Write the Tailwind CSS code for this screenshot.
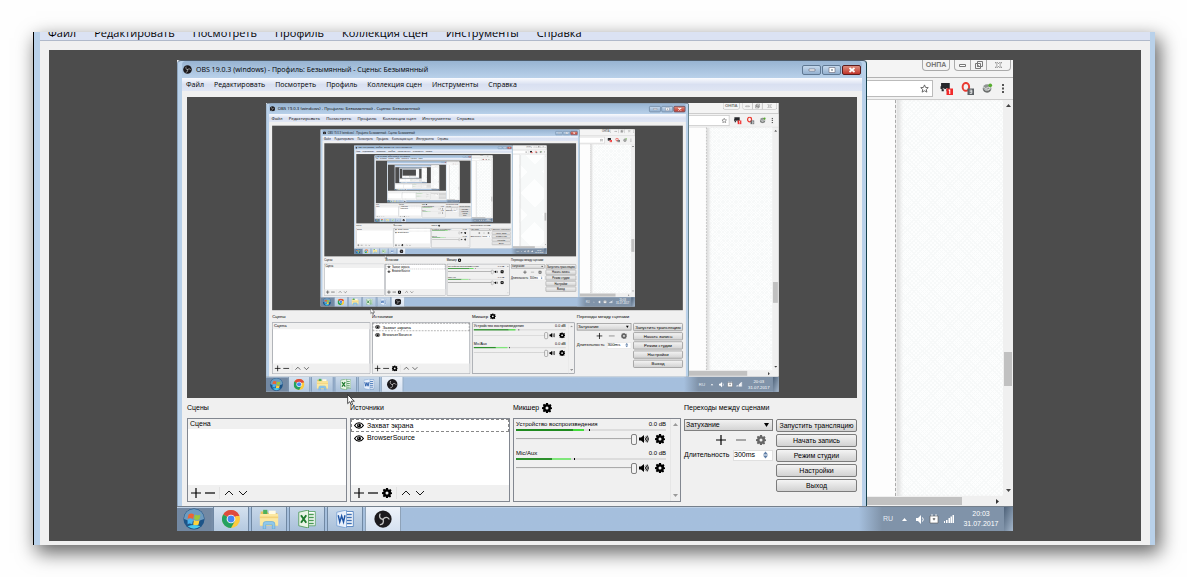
<!DOCTYPE html>
<html lang="ru">
<head>
    <meta charset="UTF-8">
    <meta name="viewport" content="width=device-width, initial-scale=1.0">
    <title>OBS 19.0.3</title>
    <script src="https://cdn.jsdelivr.net/npm/@tailwindcss/browser@4"></script>
</head>
<body class="bg-[#fefefe] p-8 font-['Open_Sans','Noto_Sans',sans-serif] text-black">
    <!-- Иконки -->
    <svg class="hidden">
        <symbol id="i-plus" viewBox="0 0 10 10"><path d="M5 0v10M0 5h10" fill="none" stroke="currentColor" stroke-width="1.2"/></symbol>
        <symbol id="i-minus" viewBox="0 0 10 10"><path d="M0 5h10" fill="none" stroke="currentColor" stroke-width="1.2"/></symbol>
        <symbol id="i-up" viewBox="0 0 10 10"><path d="M1 7l4-4 4 4" fill="none" stroke="currentColor" stroke-width=".9"/></symbol>
        <symbol id="i-down" viewBox="0 0 10 10"><path d="M1 3l4 4 4-4" fill="none" stroke="currentColor" stroke-width=".9"/></symbol>
        <symbol id="i-gear" viewBox="0 0 20 20">
            <path fill="currentColor" fill-rule="evenodd" d="M8 0h4l.6 3 1.600.7L16.800 2l2.200 2.800-1.300 2.400.5 1.300L20 9v3l-2.400.6-.7 1.600L18.200 17 15.800 19l-2.500-1.600-1 .4L12 20H8l-.5-2.500-1.400-.5L4 18.500 1.500 16l1.400-2.200-.6-1.400L0 12V8.500l2.400-.6.6-1.400L1.600 4.200 4 1.600l2.300 1.500 1.200-.4zM10 7a3 3 0 1 0 0 6 3 3 0 0 0 0-6z"/>
        </symbol>
        <symbol id="i-eye" viewBox="0 0 18 12">
            <path d="M1 6c4-6.500 12-6.500 16 0-4 6.500-12 6.500-16 0z" fill="none" stroke="#000" stroke-width="2"/>
            <circle cx="9" cy="6" r="3.600"/><circle cx="8" cy="5" r="1" fill="#fff"/>
        </symbol>
        <symbol id="i-speaker" viewBox="0 0 20 16">
            <path d="M0 5h4l6-5v16l-6-5H0z"/>
            <path d="M12 5q2.500 3 0 6M14 2.500q5 5.500 0 11M16.500 1q5 7 0 14" fill="none" stroke="#000" stroke-width="1.700"/>
        </symbol>
        <symbol id="i-obs" viewBox="0 0 24 24">
            <circle cx="12" cy="12" r="11.500" fill="#1c1a1d"/>
            <g fill="none" stroke="#c4c4c4" stroke-width="1.800" stroke-linecap="round">
                <path d="M12 12.500C8 12 6.500 9 8 5.500"/><path d="M12 12.500C14.500 9 18 9 20 12"/><path d="M12 12.500C13.500 16 12 19 8.500 19.500"/>
            </g>
        </symbol>
        <symbol id="i-cursor" viewBox="0 0 12 18"><path d="M1 1v13.500l3.200-3 2 5 2.300-1-2-4.700H11z" fill="#fff" stroke="#222" stroke-width="1.200"/></symbol>
        <symbol id="i-start" viewBox="0 0 24 24">
            <circle cx="12" cy="12" r="11.500" fill="#1d5488"/><path d="M1 12a11 11 0 0 1 22 0q-11 5-22 0z" fill="#6d9bbf"/>
            <path d="M6 7q3-2 6 0l-1 5q-3-2-6 0z" fill="#ee6432"/><path d="M13 7q3 2 6 0l-1 5q-3 2-6 0z" fill="#9bc83a"/>
            <path d="M5 13q3-2 6 0l-1 5q-3-2-5 0z" fill="#49b3ee"/><path d="M12 13q3 2 6 0l-1 5q-3 2-6 0z" fill="#fdd33d"/>
            <path d="M5 20q7 5 14 0-7-3-14 0z" fill="#49c9ee"/>
        </symbol>
        <symbol id="i-chrome" viewBox="0 0 24 24">
            <circle cx="12" cy="12" r="12" fill="#fccb3e"/>
            <path d="M12 12L1.600 6A12 12 0 0 1 22.400 6z" fill="#de4b3d"/>
            <path d="M1.600 6A12 12 0 0 0 12 24l5-9-5-3z" fill="#25a15f"/>
            <path d="M12 6h10.400l.8 2H14z" fill="#de4b3d"/>
            <circle cx="12" cy="12" r="5.800" fill="#fff"/><circle cx="12" cy="12" r="4.600" fill="#4587f3"/>
        </symbol>
        <symbol id="i-folder" viewBox="0 0 24 24">
            <path d="M2 3h8l1 2h11v15H2z" fill="#e8c35e"/><path d="M5 1h5v5H5z" fill="#4db15c"/><path d="M12 2h8v4h-8z" fill="#fffbe6"/>
            <path d="M1 6h22v14H1z" fill="#fbe8a2"/><path d="M1 9h22v2H1z" fill="#f3d27a"/>
            <path d="M5 24v-6q0-3 3-3h8q3 0 3 3v6h-3v-5H8v5z" fill="#8fc8ec" stroke="#5ba4d6" stroke-width=".7"/>
        </symbol>
        <symbol id="i-excel" viewBox="0 0 24 24">
            <path d="M9 2h14v19H9z" fill="#fff" stroke="#4a9a56"/><path d="M14 6h7M14 10h7M14 14h7M14 18h7" stroke="#4a9a56" stroke-width="2"/>
            <path d="M1 3l13-3v24L1 21z" fill="#e9f4e6" stroke="#3f9348"/><path d="M4 7l7 10M11 7L4 17" stroke="#1f7a2e" stroke-width="2.600"/>
        </symbol>
        <symbol id="i-word" viewBox="0 0 24 24">
            <path d="M9 2h14v20H9z" fill="#fff" stroke="#3d70b5"/><path d="M14 6h7M14 10h7M14 14h7M14 18h7" stroke="#3d70b5" stroke-width="2"/>
            <path d="M1 3l13-3v24L1 21z" fill="#e8f0fb" stroke="#6f9bd2"/><path d="M3 7l2 9 2.500-8L10 16l2-9" fill="none" stroke="#1f55a5" stroke-width="1.900"/>
        </symbol>
        <symbol id="i-star" viewBox="0 0 20 20"><path d="M10 2l2.400 5.600 6 .5-4.500 4 1.400 6L10 15l-5.300 3.100 1.400-6-4.500-4 6-.5z" fill="none" stroke="#555" stroke-width="1.900"/></symbol>
        <symbol id="i-hat" viewBox="0 0 24 24">
            <path d="M2 2h16v11h-3v4h-3v-4H7v4H3v-4H1V8h1z" fill="#26272b"/><path d="M5 11h3v3H5zM11 11h3v3h-3z" fill="#999"/>
            <path d="M12 12h12v12H12z" fill="#f02a2a"/><path d="M18 14v8M16 15h2" stroke="#fff" stroke-width="2"/>
        </symbol>
        <symbol id="i-opera" viewBox="0 0 24 24">
            <ellipse cx="9" cy="9" rx="6" ry="7.300" fill="none" stroke="#ea3b32" stroke-width="3.600"/>
            <path d="M12 12h12v12H12z" fill="#5c6064"/><path d="M16 15h4v6h-4M16 18h4" fill="none" stroke="#fff" stroke-width="1.500"/>
        </symbol>
        <symbol id="i-globe" viewBox="0 0 24 24">
            <circle cx="11" cy="12" r="9.500" fill="#8f9492"/><path d="M2 8q6 6 9 3t7-1q0 5-6 5T4 16M7 19l9-1" fill="none" stroke="#e8e8e8" stroke-width="2"/>
            <path d="M3 15q8 8 15 1" fill="none" stroke="#444" stroke-width="2"/><circle cx="18" cy="5" r="4" fill="#56ad2e"/>
        </symbol>
    </svg>

    <!-- Внешнее окно -->
    <div class="ml-px border-l border-black bg-[#b9d1ea] pl-[6px] pr-[5px] shadow-[4px_7px_18px_1px_rgba(0,0,0,0.6)]">
        <nav class="flex h-[9px] items-end gap-[18px] overflow-hidden border-b border-[#b0b9ca] bg-[#dbe2f3] pl-2 text-[11px] leading-[14px] whitespace-nowrap">
            <a href="#">Файл</a>
            <a href="#">Редактировать</a>
            <a href="#">Посмотреть</a>
            <a href="#">Профиль</a>
            <a href="#">Коллекция сцен</a>
            <a href="#">Инструменты</a>
            <a href="#">Справка</a>
        </nav>
        <div class="bg-[#f0f0f0] px-[9px] pt-[9px] pb-1">
            <div class="flex justify-center overflow-hidden bg-[#4c4c4c] py-[10px]">

                <!-- Захваченный рабочий стол -->
                <div id="desktop" class="relative w-[836px] shrink-0 bg-[#f0f0f0] font-['Liberation_Sans',sans-serif] text-[7px] leading-[10px]">
                    <div class="flex">
                        <!-- Окно OBS -->
                        <section class="w-[690px] rounded-t border-x border-t border-t-[#4d5a68] border-r-[#16404c] border-l-[#8fa6bf] bg-[#b9d1ea] px-1">
                            <header class="flex h-[17px] items-center justify-between rounded-t bg-linear-to-b from-[#98b4d2] to-[#b9d1ea] pl-px font-['Open_Sans','Noto_Sans',sans-serif]">
                                <div class="flex items-center gap-1">
                                    <svg class="size-[9px]"><use href="#i-obs"/></svg>
                                    <span class="whitespace-nowrap">OBS 19.0.3 (windows) - Профиль: Безымянный - Сцены: Безымянный</span>
                                </div>
                                <div class="flex gap-[1px] pr-px">
                                    <button aria-label="Свернуть" class="flex h-[10px] w-[19px] items-center justify-center rounded-xs border border-[#5f7893] bg-linear-to-b from-[#c5d8ec] to-[#93b0cf]"><svg class="h-1 w-2" viewBox="0 0 8 4"><path d="M1 1h6v2H1z" fill="#fff" stroke="#667" stroke-width=".6"/></svg></button>
                                    <button aria-label="Развернуть" class="flex h-[10px] w-[19px] items-center justify-center rounded-xs border border-[#5f7893] bg-linear-to-b from-[#c5d8ec] to-[#93b0cf]"><svg class="h-[6px] w-2" viewBox="0 0 8 6"><path d="M1 .5h6v5H1z" fill="#fff" stroke="#667" stroke-width=".6"/><path d="M3 2.500h2v1H3z" fill="#567"/></svg></button>
                                    <button aria-label="Закрыть" class="flex h-[10px] w-[19px] items-center justify-center rounded-xs border border-[#5d1c1c] bg-linear-to-b from-[#dc8c7e] to-[#c0322a]"><svg class="h-[6px] w-2" viewBox="0 0 8 6"><path d="M1.500 1l5 4M6.500 1l-5 4" stroke="#fff" stroke-width="1.700"/></svg></button>
                                </div>
                            </header>
                            <nav class="flex h-[13px] items-center gap-[10px] bg-linear-to-b from-[#fafbfe] via-[#d9e0f1] to-[#e0e6f4] pl-1 font-['Open_Sans','Noto_Sans',sans-serif] whitespace-nowrap">
                                <a href="#">Файл</a>
                                <a href="#">Редактировать</a>
                                <a href="#">Посмотреть</a>
                                <a href="#">Профиль</a>
                                <a href="#">Коллекция сцен</a>
                                <a href="#">Инструменты</a>
                                <a href="#">Справка</a>
                            </nav>
                            <div class="bg-[#f0f0f0] px-[5px] pt-[6px] pb-1">
                                <!-- Предпросмотр -->
                                <div class="flex h-[301px] justify-center overflow-hidden bg-[#4c4c4c] pt-[6px]">
                                    <div data-preview class="h-[289px] w-[512px]"></div>
                                </div>
                                <div class="grid grid-cols-[160px_160px_168px_89px_1fr] grid-rows-[20px_84px] gap-x-[3px]">
                                    <h2 class="flex items-center">Сцены</h2>
                                    <h2 class="flex items-center">Источники</h2>
                                    <h2 class="flex items-center gap-[3px]">Микшер <svg class="size-[10px]"><use href="#i-gear"/></svg></h2>
                                    <h2 class="col-span-2 flex items-center whitespace-nowrap">Переходы между сценами</h2>

                                    <!-- Сцены -->
                                    <div class="flex flex-col border border-[#828790] bg-white">
                                        <ul class="flex-1"><li class="bg-[#f0f0f0] pl-[2px]">Сцена</li></ul>
                                        <div class="flex h-4 items-center gap-1 bg-[#f0f0f0] px-[3px]">
                                            <button aria-label="Добавить сцену"><svg class="size-[10px]"><use href="#i-plus"/></svg></button>
                                            <button aria-label="Удалить сцену"><svg class="size-[10px]"><use href="#i-minus"/></svg></button>
                                            <span class="h-3 w-px bg-[#e2e2e2]"></span>
                                            <button aria-label="Выше"><svg class="size-[10px]"><use href="#i-up"/></svg></button>
                                            <button aria-label="Ниже"><svg class="size-[10px]"><use href="#i-down"/></svg></button>
                                        </div>
                                    </div>

                                    <!-- Источники -->
                                    <div class="flex flex-col border border-[#828790] bg-white">
                                        <ul class="flex-1 leading-[12px]">
                                            <li class="flex h-[13px] items-center gap-[3px] border border-dashed border-[#888] pl-[2px]"><svg class="h-[7px] w-[10px]"><use href="#i-eye"/></svg>Захват экрана</li>
                                            <li class="flex h-3 items-center gap-[3px] pl-[3px]"><svg class="h-[7px] w-[10px]"><use href="#i-eye"/></svg>BrowserSource</li>
                                        </ul>
                                        <div class="flex h-4 items-center gap-1 bg-[#f0f0f0] px-[3px]">
                                            <button aria-label="Добавить источник"><svg class="size-[10px]"><use href="#i-plus"/></svg></button>
                                            <button aria-label="Удалить источник"><svg class="size-[10px]"><use href="#i-minus"/></svg></button>
                                            <button aria-label="Свойства"><svg class="size-[10px]"><use href="#i-gear"/></svg></button>
                                            <span class="h-3 w-px bg-[#e2e2e2]"></span>
                                            <button aria-label="Выше"><svg class="size-[10px]"><use href="#i-up"/></svg></button>
                                            <button aria-label="Ниже"><svg class="size-[10px]"><use href="#i-down"/></svg></button>
                                        </div>
                                    </div>

                                    <!-- Микшер -->
                                    <div class="flex border border-[#828790]">
                                        <div class="flex-1 pr-1 pl-[2px] text-[6px]">
                                            <div class="h-[29px]">
                                                <div class="flex justify-between"><span>Устройство воспроизведения</span><span>0.0 dB</span></div>
                                                <div class="flex h-[2px] bg-[#dcdcdc]"><i class="w-[57px] bg-[#1f8a1f]"></i><i class="w-[11px] bg-[#43dd3a]"></i><i class="ml-[5px] w-px bg-black"></i></div>
                                                <div class="flex h-4 items-center gap-[2px]">
                                                    <input type="range" value="100" aria-label="Громкость воспроизведения" class="h-3 w-[121px] appearance-none bg-linear-to-b from-transparent from-40% via-[#a5a5a5] via-45% to-transparent to-55% [&::-webkit-slider-thumb]:h-[11px] [&::-webkit-slider-thumb]:w-[6px] [&::-webkit-slider-thumb]:appearance-none [&::-webkit-slider-thumb]:rounded-xs [&::-webkit-slider-thumb]:border [&::-webkit-slider-thumb]:border-[#808080] [&::-webkit-slider-thumb]:bg-[#f2f2f2]">
                                                    <button aria-label="Звук"><svg class="h-2 w-[10px]"><use href="#i-speaker"/></svg></button>
                                                    <button aria-label="Настройки звука" class="ml-1"><svg class="size-[10px]"><use href="#i-gear"/></svg></button>
                                                </div>
                                            </div>
                                            <div class="h-[29px]">
                                                <div class="flex justify-between"><span>Mic/Aux</span><span>0.0 dB</span></div>
                                                <div class="flex h-[2px] bg-[#dcdcdc]"><i class="w-[36px] bg-[#2c8f2c]"></i><i class="w-[19px] bg-[#7fe67a]"></i><i class="ml-[3px] w-px bg-black"></i></div>
                                                <div class="flex h-4 items-center gap-[2px]">
                                                    <input type="range" value="100" aria-label="Громкость микрофона" class="h-3 w-[121px] appearance-none bg-linear-to-b from-transparent from-40% via-[#a5a5a5] via-45% to-transparent to-55% [&::-webkit-slider-thumb]:h-[11px] [&::-webkit-slider-thumb]:w-[6px] [&::-webkit-slider-thumb]:appearance-none [&::-webkit-slider-thumb]:rounded-xs [&::-webkit-slider-thumb]:border [&::-webkit-slider-thumb]:border-[#808080] [&::-webkit-slider-thumb]:bg-[#f2f2f2]">
                                                    <button aria-label="Звук"><svg class="h-2 w-[10px]"><use href="#i-speaker"/></svg></button>
                                                    <button aria-label="Настройки звука" class="ml-1"><svg class="size-[10px]"><use href="#i-gear"/></svg></button>
                                                </div>
                                            </div>
                                        </div>
                                        <div class="flex w-[10px] flex-col items-center justify-between border-l border-[#e6e6e6] py-1">
                                            <svg class="h-[3px] w-[5px]" viewBox="0 0 5 3"><path d="M0 3l2.500-3L5 3z" fill="#999"/></svg>
                                            <svg class="h-[3px] w-[5px]" viewBox="0 0 5 3"><path d="M0 0l2.500 3L5 0z" fill="#999"/></svg>
                                        </div>
                                    </div>

                                    <!-- Переходы -->
                                    <div class="pt-px">
                                        <div class="relative">
                                            <select aria-label="Переход" class="block h-3 w-full appearance-none border border-[#808080] bg-linear-to-b from-[#f2f2f2] to-[#d4d4d4] pl-px"><option>Затухание</option></select>
                                            <svg class="pointer-events-none absolute top-1 right-1 h-1 w-[5px]" viewBox="0 0 5 4"><path d="M0 0h5L2.500 4z"/></svg>
                                        </div>
                                        <div class="flex h-[18px] items-center justify-end gap-[10px] pr-[7px]">
                                            <button aria-label="Добавить переход"><svg class="size-[10px]"><use href="#i-plus"/></svg></button>
                                            <button aria-label="Удалить переход" class="text-[#777]"><svg class="size-[10px]"><use href="#i-minus"/></svg></button>
                                            <button aria-label="Свойства перехода" class="text-[#666]"><svg class="size-[10px]"><use href="#i-gear"/></svg></button>
                                        </div>
                                        <label class="flex h-3 items-center justify-between">Длительность
                                            <span class="flex h-[11px] w-[40px] items-center border border-[#e0e0e0] bg-white pr-1">
                                                <input type="text" value="300ms" class="w-full min-w-0">
                                                <svg class="h-[8px] w-[5px] shrink-0" viewBox="0 0 5 8"><path d="M0 3.400L2.500.5 5 3.400zM0 4.600h5L2.500 7.500z" fill="#5f7fa8"/></svg>
                                            </span>
                                        </label>
                                    </div>
                                    <div class="flex flex-col gap-[2px] pt-px whitespace-nowrap">
                                        <button class="h-[13px] rounded-xs border border-[#7c7c7c] bg-linear-to-b from-[#f4f4f4] to-[#d2d2d2] leading-[10px]">Запустить трансляцию</button>
                                        <button class="h-[13px] rounded-xs border border-[#7c7c7c] bg-linear-to-b from-[#f4f4f4] to-[#d2d2d2] leading-[10px]">Начать запись</button>
                                        <button class="h-[13px] rounded-xs border border-[#7c7c7c] bg-linear-to-b from-[#f4f4f4] to-[#d2d2d2] leading-[10px]">Режим студии</button>
                                        <button class="h-[13px] rounded-xs border border-[#7c7c7c] bg-linear-to-b from-[#f4f4f4] to-[#d2d2d2] leading-[10px]">Настройки</button>
                                        <button class="h-[13px] rounded-xs border border-[#7c7c7c] bg-linear-to-b from-[#f4f4f4] to-[#d2d2d2] leading-[10px]">Выход</button>
                                    </div>
                                </div>
                            </div>
                        </section>

                        <!-- Браузер за окном -->
                        <section class="flex flex-1 flex-col bg-[#f4f4f4]">
                            <div class="flex h-[18px] items-start justify-end gap-1 border-b border-[#b2b2b2] pr-[2px] text-[#777]">
                                <span class="h-[11px] w-7 rounded-b border border-t-0 border-[#aaa] text-center font-bold">ОНПА</span>
                                <div class="flex h-[11px] w-[57px] divide-x divide-[#aaa] rounded-b border border-t-0 border-[#aaa]">
                                    <button aria-label="Свернуть" class="flex w-4 items-center justify-center"><svg class="h-[3px] w-[7px]" viewBox="0 0 7 3"><path d="M.5.5h6v2h-6z" fill="#fff" stroke="#777"/></svg></button>
                                    <button aria-label="Окно" class="flex w-4 items-center justify-center"><svg class="size-2" viewBox="0 0 8 8"><path d="M2.500.5h5v5h-5zM.5 2.500h5v5h-5zM2.500 4.500h1v1h-1z" fill="none" stroke="#777"/></svg></button>
                                    <button aria-label="Закрыть" class="flex flex-1 items-center justify-center"><svg class="h-[6px] w-[7px]" viewBox="0 0 7 6"><path d="M0 0h2l1.500 2L5 0h2L4.700 3 7 6H5L3.500 4 2 6H0l2.300-3z" fill="#fff" stroke="#777" stroke-width=".7"/></svg></button>
                                </div>
                            </div>
                            <div class="flex h-[22px] items-center border-b border-[#ccc] bg-[#f2f2f2] pr-2">
                                <div class="flex h-[17px] w-[66px] items-center justify-end border border-l-0 border-[#bbb] bg-white pr-[3px]"><svg class="size-[9px]"><use href="#i-star"/></svg></div>
                                <div class="flex flex-1 items-center justify-between pl-[7px]">
                                    <svg class="size-[13px]"><use href="#i-hat"/></svg>
                                    <svg class="size-[13px]"><use href="#i-opera"/></svg>
                                    <svg class="size-[11px]"><use href="#i-globe"/></svg>
                                    <svg class="h-[9px] w-1" viewBox="0 0 4 9"><path d="M1 0h2v2H1zM1 3.500h2v2H1zM1 7h2v2H1z" fill="#555"/></svg>
                                </div>
                            </div>
                            <div class="flex flex-1">
                                <div class="w-[28px] bg-[#fdfdfd]"></div>
                                <div class="w-[2px] border-l border-dashed border-[#aaa] bg-[#f0f0f0]"></div>
                                <div class="flex-1 bg-[#fdfefe] bg-[repeating-linear-gradient(45deg,#f7f9f9_0_1px,transparent_1px_3px),repeating-linear-gradient(-45deg,#f7f9f9_0_1px,transparent_1px_3px)] shadow-[inset_5px_0_4px_-2px_#dedede]"></div>
                                <div class="flex w-[10px] flex-col items-center bg-[#f0f0f0] py-1">
                                    <svg class="h-[3px] w-[5px]" viewBox="0 0 5 3"><path d="M0 3l2.500-3L5 3z" fill="#444"/></svg>
                                    <div class="mt-[245px] h-[34px] w-2 bg-[#c1c1c1]"></div>
                                    <svg class="mt-auto h-[3px] w-[5px]" viewBox="0 0 5 3"><path d="M0 0l2.500 3L5 0z" fill="#444"/></svg>
                                </div>
                            </div>
                            <div class="flex h-[10px] items-center justify-between bg-[#f0f0f0]">
                                <div class="h-2 w-[95px] bg-[#c1c1c1]"></div>
                                <svg class="mr-[14px] h-[5px] w-[3px]" viewBox="0 0 3 5"><path d="M0 0l3 2.500L0 5z" fill="#333"/></svg>
                            </div>
                        </section>
                    </div>

                    <!-- Панель задач -->
                    <footer class="flex h-[25px] items-stretch gap-[2px] border-t border-[#75808c] bg-linear-to-r from-[#7389a3] from-4% via-[#a5bfdd] via-7% to-[#a5bfdd] to-80% shadow-[inset_0_1px_#bdd0e6]">
                        <button aria-label="Пуск" class="flex w-[34px] items-center justify-center"><svg class="size-[22px]"><use href="#i-start"/></svg></button>
                        <button aria-label="Chrome" class="flex w-9 items-center justify-center border-x border-[#7088a3] bg-linear-to-b from-[#d4e1ef] to-[#b4c9e0]"><svg class="size-[18px]"><use href="#i-chrome"/></svg></button>
                        <button aria-label="Проводник" class="flex w-9 items-center justify-center border-x border-[#7088a3] bg-linear-to-b from-[#c8d8e9] to-[#a9c0da]"><svg class="size-5"><use href="#i-folder"/></svg></button>
                        <button aria-label="Excel" class="flex w-9 items-center justify-center border-x border-[#7088a3] bg-linear-to-b from-[#c8d8e9] to-[#a9c0da]"><svg class="size-[18px]"><use href="#i-excel"/></svg></button>
                        <button aria-label="Word" class="flex w-9 items-center justify-center border-x border-[#7088a3] bg-linear-to-b from-[#c8d8e9] to-[#a9c0da]"><svg class="size-[18px]"><use href="#i-word"/></svg></button>
                        <button aria-label="OBS" class="flex w-9 items-center justify-center border-x border-[#8ea2b8] bg-linear-to-b from-[#eef3fa] to-[#d5e1f0]"><svg class="size-[18px]"><use href="#i-obs"/></svg></button>
                        <div class="ml-auto flex w-[154px] items-center bg-linear-to-r from-[#a5bfdd] to-[#8093a9] to-15% text-white">
                            <span class="w-[34px] pl-6 text-[#e4ebf2]">RU</span>
                            <svg class="ml-[9px] h-[3px] w-[5px]" viewBox="0 0 5 3"><path d="M0 3l2.500-3L5 3z" fill="#fff"/></svg>
                            <svg class="ml-[9px] h-[9px] w-2" viewBox="0 0 8 9"><path d="M0 3h2l3-3v9L2 6H0z" fill="#fff"/><path d="M6.500 2.500q1.500 2 0 4" fill="none" stroke="#fff"/></svg>
                            <svg class="ml-[5px] size-[10px]" viewBox="0 0 10 10"><path d="M1 2h8v7H1z" fill="#fff" stroke="#555" stroke-width=".6"/><path d="M3 0v2M7 0v2M3 4h4L5 7z" fill="#333" stroke="#fff" stroke-width=".8"/></svg>
                            <svg class="ml-[5px] h-2 w-[10px]" viewBox="0 0 10 8"><path d="M0 6h1v2H0zM2 5h1.500v3H2zM4.500 3H6v5H4.500zM6.500 1.500H8v6.500H6.500zM8.500 0H10v8H8.500z" fill="#fff"/></svg>
                            <div class="ml-auto w-[44px] text-center"><div>20:03</div><div>31.07.2017</div></div>
                            <button aria-label="Свернуть все окна" class="ml-px h-full w-[9px] bg-linear-to-br from-[#4d6178] to-[#a6b8cc]"></button>
                        </div>
                    </footer>
                    <svg class="absolute top-[334px] left-[170px] h-3 w-2"><use href="#i-cursor"/></svg>
                </div>
            </div>
        </div>
    </div>

    <script>
        // OBS снимает собственный экран, поэтому в предпросмотре повторяется весь рабочий стол
        const desktop = document.getElementById("desktop");
        const original = desktop.cloneNode(true);
        original.removeAttribute("id");
        original.classList.add("scale-[0.613]", "origin-top-left");

        let preview = desktop.querySelector("[data-preview]");
        for (let depth = 0; depth < 8; depth++) {
            const copy = original.cloneNode(true);
            copy.inert = true;
            preview.appendChild(copy);
            preview = copy.querySelector("[data-preview]");
        }
    </script>
</body>
</html>
